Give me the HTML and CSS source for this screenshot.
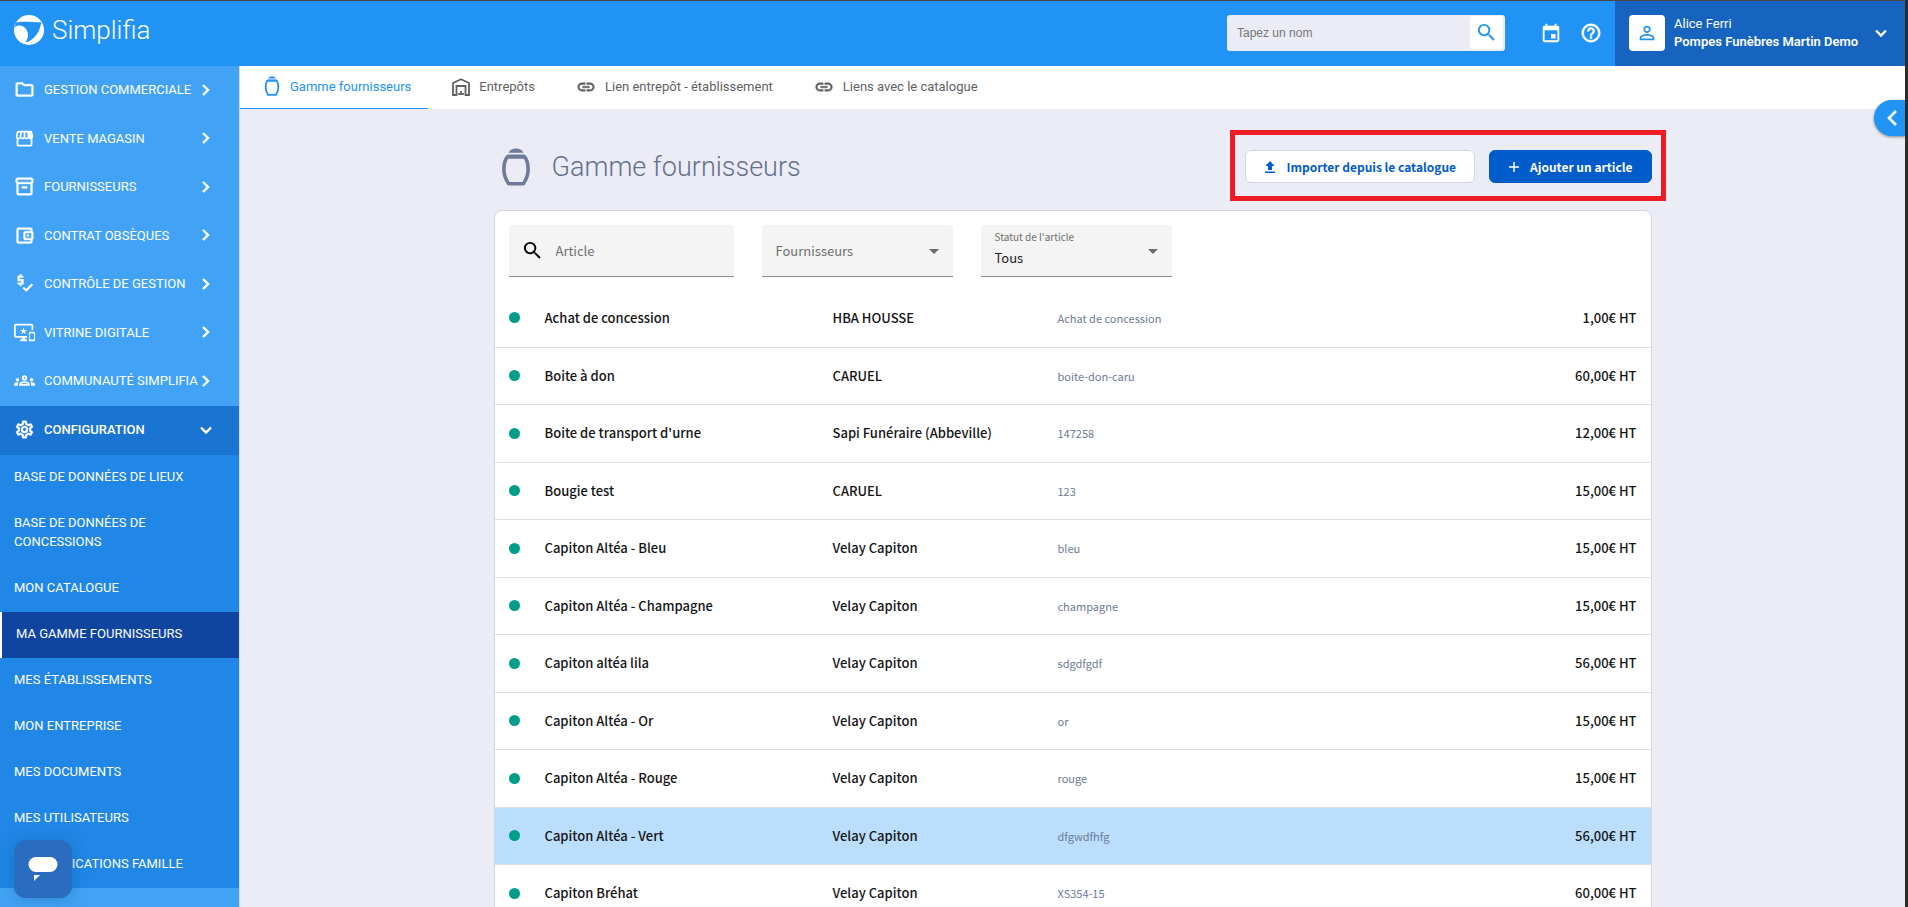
FILE: index.html
```html
<!DOCTYPE html>
<html lang="fr">
<head>
<meta charset="utf-8">
<title>Simplifia - Gamme fournisseurs</title>
<link rel="stylesheet" href="styles.css">
</head>
<body>
<svg class="defs" aria-hidden="true">
  <symbol id="chev" viewBox="0 0 16 16"><path d="M5 3l5 5-5 5" fill="none" stroke="currentColor" stroke-width="2.4"/></symbol>
  <symbol id="chev-down" viewBox="0 0 16 16"><path d="M3 5.500l5 5 5-5" fill="none" stroke="currentColor" stroke-width="2.400"/></symbol>
  <symbol id="link" viewBox="0 0 24 24"><path d="M3.900 12c0-1.710 1.390-3.100 3.100-3.100h4V7H7c-2.760 0-5 2.240-5 5s2.240 5 5 5h4v-1.900H7c-1.710 0-3.100-1.390-3.100-3.100zM8 13h8v-2H8v2zm9-6h-4v1.900h4c1.710 0 3.100 1.390 3.100 3.100s-1.390 3.100-3.100 3.100h-4V17h4c2.760 0 5-2.240 5-5s-2.240-5-5-5z" fill="currentColor" stroke="currentColor" stroke-width=".6"/></symbol>
  <symbol id="search" viewBox="0 0 24 24"><path d="M15.500 14h-.79l-.28-.27A6.471 6.471 0 0 0 16 9.500 6.500 6.500 0 1 0 9.500 16c1.610 0 3.090-.59 4.230-1.570l.27.28v.79l5 4.990L20.490 19l-4.990-5zm-6 0C7.010 14 5 11.990 5 9.500S7.010 5 9.500 5 14 7.010 14 9.500 11.990 14 9.500 14z" fill="currentColor"/></symbol>
  <symbol id="urn" viewBox="0 0 28 38"><path d="M6.500 4.800C8 1.800 11 .5 14 .5s6 1.300 7.500 4.300z" fill="currentColor"/><path d="M5.500 6.500h17l1.500 3H4z" fill="currentColor"/><path d="M5.200 9h17.600c2.500 3.500 3.300 7.500 3.300 12 0 6-2 11-4.800 14.800H6.700C3.900 32 1.900 27 1.900 21c0-4.500.8-8.500 3.300-12z" fill="none" stroke="currentColor" stroke-width="3.600" stroke-linejoin="round"/></symbol>
</svg>
<div class="app">
  <header class="topbar">
    <a class="brand" href="#">
      <svg width="30" height="30" viewBox="0 0 30 30"><circle cx="15" cy="15" r="15" fill="#fff"/><path d="M1.800 7.500C8 6 18 7.200 27.300 7.200 26 16 21 25 11.500 27.600 16 21.500 14.500 12.500 6.500 10.600 4.500 10.200 2.500 10.600.8 12.200z" fill="#2193f5"/></svg>
      <span>Simplifia</span>
    </a>
    <form class="search">
      <input type="text" placeholder="Tapez un nom" aria-label="Tapez un nom">
      <button type="button" aria-label="Rechercher"><svg width="23" height="23"><use href="#search"/></svg></button>
    </form>
    <div class="tools">
      <button type="button" aria-label="Agenda"><svg width="22" height="22" viewBox="0 0 24 24"><path d="M19 4h-1V2h-2v2H8V2H6v2H5c-1.110 0-1.990.9-1.990 2L3 20a2 2 0 0 0 2 2h14c1.100 0 2-.9 2-2V6c0-1.100-.9-2-2-2zm0 16H5V9h14v11zm-7-7h5v5h-5z" fill="#fff"/></svg></button>
      <button type="button" aria-label="Aide"><svg width="22" height="22" viewBox="0 0 24 24"><path d="M11 18h2v-2h-2v2zm1-16C6.480 2 2 6.480 2 12s4.480 10 10 10 10-4.480 10-10S17.520 2 12 2zm0 18c-4.410 0-8-3.590-8-8s3.590-8 8-8 8 3.590 8 8-3.590 8-8 8zm0-14c-2.210 0-4 1.790-4 4h2c0-1.100.9-2 2-2s2 .9 2 2c0 2-3 1.750-3 5h2c0-2.250 3-2.500 3-5 0-2.210-1.790-4-4-4z" fill="#fff" stroke="#fff" stroke-width=".6"/></svg></button>
    </div>
    <button type="button" class="user">
      <span class="avatar"><svg width="22" height="22" viewBox="0 0 24 24"><path d="M12 5.900a2.100 2.100 0 1 1 0 4.200 2.100 2.100 0 0 1 0-4.200m0 9c2.970 0 6.100 1.460 6.100 2.100v1.100H5.900V17c0-.64 3.130-2.100 6.100-2.100M12 4C9.790 4 8 5.790 8 8s1.790 4 4 4 4-1.790 4-4-1.790-4-4-4zm0 9c-2.670 0-8 1.340-8 4v3h16v-3c0-2.660-5.330-4-8-4z" fill="#2193f5"/></svg></span>
      <span class="who"><span>Alice Ferri</span><strong>Pompes Funèbres Martin Demo</strong></span>
      <svg width="16" height="16"><use href="#chev-down"/></svg>
    </button>
  </header>

  <nav class="sidebar" aria-label="Menu principal">
    <ul class="menu">
      <li><a href="#"><svg viewBox="0 0 24 24"><path d="M9.170 6l2 2H20v10H4V6h5.170M10 4H4c-1.100 0-1.990.9-1.990 2L2 18c0 1.100.9 2 2 2h16c1.100 0 2-.9 2-2V8c0-1.100-.9-2-2-2h-8l-2-2z" stroke="currentColor" stroke-width=".5"/></svg><span>GESTION COMMERCIALE</span><svg class="arrow"><use href="#chev"/></svg></a></li>
      <li><a href="#"><svg viewBox="0 0 24 24"><path d="M21.900 8.890l-1.050-4.370c-.22-.9-1-1.520-1.910-1.520H5.050c-.9 0-1.690.63-1.900 1.520L2.100 8.890c-.24 1.020-.02 2.060.62 2.880.08.110.19.190.28.290V19c0 1.100.9 2 2 2h14c1.100 0 2-.9 2-2v-6.940c.09-.09.2-.18.28-.28.64-.82.87-1.870.62-2.890zM13 5h1.960l.54 4.520c.05.390-.07.780-.33 1.070-.22.260-.54.410-.95.410-.67 0-1.220-.59-1.220-1.310V5zM8.490 9.520L9.040 5H11v4.690c0 .72-.55 1.310-1.290 1.310-.34 0-.65-.15-.89-.41a1.420 1.420 0 0 1-.33-1.070zm-4.450-.16L5.050 5h1.970l-.58 4.860c-.08.650-.6 1.140-1.210 1.140-.49 0-.8-.29-.93-.47-.27-.32-.36-.75-.26-1.170zM5 19v-6.030c.08.010.15.030.23.030.87 0 1.660-.36 2.240-.95.6.6 1.400.95 2.310.95.87 0 1.650-.36 2.230-.93.590.57 1.390.93 2.290.93.840 0 1.640-.35 2.240-.95.580.59 1.370.95 2.240.95.080 0 .15-.02.23-.03V19H5z"/></svg><span>VENTE MAGASIN</span><svg class="arrow"><use href="#chev"/></svg></a></li>
      <li><a href="#"><svg viewBox="0 0 24 24"><path d="M20 2H4c-1 0-2 .9-2 2v3.010c0 .72.430 1.340 1 1.690V20c0 1.100 1.100 2 2 2h14c.9 0 2-.9 2-2V8.700c.57-.35 1-.97 1-1.690V4c0-1.100-1-2-2-2zm-1 18H5V9h14v11zm1-13H4V4h16v3zM9 12h6v2H9z" stroke="currentColor" stroke-width=".5"/></svg><span>FOURNISSEURS</span><svg class="arrow"><use href="#chev"/></svg></a></li>
      <li><a href="#"><svg viewBox="0 0 24 24"><path d="M21 7.280V5c0-1.100-.9-2-2-2H5a2 2 0 0 0-2 2v14a2 2 0 0 0 2 2h14c1.100 0 2-.9 2-2v-2.280A2 2 0 0 0 22 15V9a2 2 0 0 0-1-1.720zM20 9v6h-7V9h7zM5 19V5h14v2h-6c-1.100 0-2 .9-2 2v6c0 1.100.9 2 2 2h6v2H5z" stroke="currentColor" stroke-width=".5"/><circle cx="16" cy="12" r="1.500"/></svg><span>CONTRAT OBSÈQUES</span><svg class="arrow"><use href="#chev"/></svg></a></li>
      <li><a href="#"><svg viewBox="0 0 24 24"><path class="line" d="M10.800 4.200H5.200v3.900h4.600V12H4M7.500 1.500v2.700M7.500 12v2.500M10.500 16.500l3.500 3.300 7-7"/></svg><span>CONTRÔLE DE GESTION</span><svg class="arrow"><use href="#chev"/></svg></a></li>
      <li><a href="#"><svg viewBox="0 0 24 24"><path d="M23 11.010L18 11c-.55 0-1 .45-1 1v9c0 .55.450 1 1 1h5c.55 0 1-.45 1-1v-9c0-.55-.45-.99-1-.99zM23 20h-5v-7h5v7zM20 2H2C.89 2 0 2.890 0 4v12c0 1.100.89 2 2 2h7v2H7v2h8v-2h-2v-2h2v-2H2V4h18v5h2V4a2 2 0 0 0-2-2zm-8.030 7L11 6l-.97 3H7l2.470 1.760-.94 2.910 2.470-1.800 2.470 1.800-.94-2.910L15 9h-3.030z"/></svg><span>VITRINE DIGITALE</span><svg class="arrow"><use href="#chev"/></svg></a></li>
      <li><a href="#"><svg viewBox="0 0 24 24"><path d="M4 13c1.100 0 2-.9 2-2s-.9-2-2-2-2 .9-2 2 .9 2 2 2zm1.130 1.100C4.760 14.040 4.390 14 4 14c-.99 0-1.930.210-2.780.580A2.010 2.010 0 0 0 0 16.430V18h4.500v-1.610c0-.83.230-1.610.63-2.290zM20 13c1.100 0 2-.9 2-2s-.9-2-2-2-2 .9-2 2 .9 2 2 2zm4 3.430c0-.81-.48-1.530-1.220-1.850A6.950 6.950 0 0 0 20 14c-.39 0-.76.040-1.130.1.400.68.630 1.460.63 2.290V18H24v-1.570zm-7.760-2.780A10.500 10.500 0 0 0 12 12.750c-1.630 0-3.070.390-4.240.9A2.990 2.990 0 0 0 6 16.390V18h12v-1.610c0-1.180-.68-2.260-1.760-2.740zM8.070 16c.09-.23.130-.39.910-.69a8.300 8.300 0 0 1 6.040 0c.77.300.81.460.91.690H8.070zM12 8c.55 0 1 .45 1 1s-.45 1-1 1-1-.45-1-1 .45-1 1-1m0-2a3 3 0 1 0 0 6 3 3 0 0 0 0-6z"/></svg><span>COMMUNAUTÉ SIMPLIFIA</span><svg class="arrow"><use href="#chev"/></svg></a></li>
      <li class="open"><a href="#"><svg viewBox="0 0 24 24"><path d="M19.430 12.980c.04-.32.070-.64.070-.98s-.03-.66-.07-.98l2.110-1.650c.19-.15.240-.42.120-.64l-2-3.460a.5.500 0 0 0-.61-.22l-2.490 1c-.52-.4-1.080-.73-1.690-.98l-.38-2.650A.49.490 0 0 0 14 2h-4a.49.490 0 0 0-.49.420l-.38 2.650c-.61.250-1.170.590-1.690.98l-2.490-1a.5.500 0 0 0-.61.220l-2 3.460c-.13.220-.07.490.12.640l2.110 1.650c-.04.320-.07.650-.07.980s.03.660.07.980l-2.110 1.650c-.19.150-.24.420-.12.640l2 3.460c.12.220.390.290.61.220l2.490-1c.52.400 1.080.730 1.690.98l.38 2.650c.03.240.240.420.49.420h4c.25 0 .46-.18.49-.42l.38-2.650c.61-.25 1.170-.59 1.690-.98l2.490 1a.5.500 0 0 0 .61-.22l2-3.460c.12-.22.070-.49-.12-.64l-2.110-1.650zm-1.980-1.710c.04.310.050.520.050.73 0 .21-.02.430-.05.730l-.14 1.130.89.700 1.080.840-.7 1.210-1.270-.51-1.040-.42-.9.680c-.43.320-.84.560-1.250.73l-1.060.43-.16 1.130-.2 1.350h-1.400l-.19-1.350-.16-1.130-1.060-.43c-.43-.18-.83-.41-1.230-.71l-.91-.7-1.060.43-1.270.510-.7-1.210 1.080-.84.890-.7-.14-1.130c-.03-.31-.05-.54-.05-.74s.02-.43.050-.73l.14-1.130-.89-.7-1.080-.84.700-1.210 1.270.510 1.040.420.9-.68c.43-.32.840-.56 1.250-.73l1.060-.43.160-1.130.2-1.350h1.390l.19 1.350.16 1.130 1.060.43c.43.180.83.410 1.230.71l.91.700 1.060-.43 1.270-.51.700 1.210-1.070.85-.89.700.14 1.130zM12 8a4 4 0 1 0 0 8 4 4 0 0 0 0-8zm0 6a2 2 0 1 1 0-4 2 2 0 0 1 0 4z" stroke="currentColor" stroke-width=".5"/></svg><span>CONFIGURATION</span><svg class="arrow"><use href="#chev-down"/></svg></a></li>
    </ul>
    <ul class="submenu">
      <li><a href="#">BASE DE DONNÉES DE LIEUX</a></li>
      <li><a href="#">BASE DE DONNÉES DE CONCESSIONS</a></li>
      <li><a href="#">MON CATALOGUE</a></li>
      <li><a href="#" class="current" aria-current="page">MA GAMME FOURNISSEURS</a></li>
      <li><a href="#">MES ÉTABLISSEMENTS</a></li>
      <li><a href="#">MON ENTREPRISE</a></li>
      <li><a href="#">MES DOCUMENTS</a></li>
      <li><a href="#">MES UTILISATEURS</a></li>
      <li><a href="#">COMMUNICATIONS FAMILLE</a></li>
    </ul>
  </nav>

  <main class="main">
    <nav class="tabs" aria-label="Sections">
      <a href="#" class="active"><svg width="16" height="20"><use href="#urn"/></svg>Gamme fournisseurs</a>
      <a href="#"><svg width="18" height="18" viewBox="0 0 18 18" fill="none" stroke="currentColor" stroke-width="1.800"><path d="M1 17V5l8-3.800L17 5v12h-3.500V8h-9v9z"/><path d="M7 17v-2m2 2v-4m2 4v-2"/></svg>Entrepôts</a>
      <a href="#"><svg width="20" height="20"><use href="#link"/></svg>Lien entrepôt - établissement</a>
      <a href="#"><svg width="20" height="20"><use href="#link"/></svg>Liens avec le catalogue</a>
    </nav>
    <div class="content">
      <div class="heading">
        <svg width="28" height="38"><use href="#urn"/></svg>
        <h1>Gamme fournisseurs</h1>
        <div class="actions">
          <button type="button" class="btn"><svg width="12" height="12" viewBox="0 0 12 12"><path d="M6 0l4.500 5H8v4H4V5H1.500zM1 10.500h10V12H1z" fill="currentColor"/></svg>Importer depuis le catalogue</button>
          <button type="button" class="btn primary"><svg width="12" height="12" viewBox="0 0 12 12"><path d="M6 1v10M1 6h10" stroke="currentColor" stroke-width="1.500"/></svg>Ajouter un article</button>
        </div>
      </div>
      <section class="card">
        <div class="filters">
          <label class="field wide"><svg class="glass" width="23" height="23"><use href="#search"/></svg><input type="text" placeholder="Article" aria-label="Article"></label>
          <label class="field"><select aria-label="Fournisseurs"><option>Fournisseurs</option></select><span class="caret"></span></label>
          <label class="field chosen"><span class="caption">Statut de l'article</span><select><option>Tous</option></select><span class="caret"></span></label>
        </div>
        <table>
          <colgroup><col class="c-dot"><col class="c-name"><col class="c-sup"><col><col class="c-price"></colgroup>
          <tbody>
            <tr><td><i class="dot"></i></td><td>Achat de concession</td><td>HBA HOUSSE</td><td class="ref">Achat de concession</td><td class="price">1,00€ HT</td></tr>
            <tr><td><i class="dot"></i></td><td>Boite à don</td><td>CARUEL</td><td class="ref">boite-don-caru</td><td class="price">60,00€ HT</td></tr>
            <tr><td><i class="dot"></i></td><td>Boite de transport d'urne</td><td>Sapi Funéraire (Abbeville)</td><td class="ref">147258</td><td class="price">12,00€ HT</td></tr>
            <tr><td><i class="dot"></i></td><td>Bougie test</td><td>CARUEL</td><td class="ref">123</td><td class="price">15,00€ HT</td></tr>
            <tr><td><i class="dot"></i></td><td>Capiton Altéa - Bleu</td><td>Velay Capiton</td><td class="ref">bleu</td><td class="price">15,00€ HT</td></tr>
            <tr><td><i class="dot"></i></td><td>Capiton Altéa - Champagne</td><td>Velay Capiton</td><td class="ref">champagne</td><td class="price">15,00€ HT</td></tr>
            <tr><td><i class="dot"></i></td><td>Capiton altéa lila</td><td>Velay Capiton</td><td class="ref">sdgdfgdf</td><td class="price">56,00€ HT</td></tr>
            <tr><td><i class="dot"></i></td><td>Capiton Altéa - Or</td><td>Velay Capiton</td><td class="ref">or</td><td class="price">15,00€ HT</td></tr>
            <tr><td><i class="dot"></i></td><td>Capiton Altéa - Rouge</td><td>Velay Capiton</td><td class="ref">rouge</td><td class="price">15,00€ HT</td></tr>
            <tr class="hover"><td><i class="dot"></i></td><td>Capiton Altéa - Vert</td><td>Velay Capiton</td><td class="ref">dfgwdfhfg</td><td class="price">56,00€ HT</td></tr>
            <tr><td><i class="dot"></i></td><td>Capiton Bréhat</td><td>Velay Capiton</td><td class="ref">XS354-15</td><td class="price">60,00€ HT</td></tr>
          </tbody>
        </table>
      </section>
    </div>
    <button type="button" class="drawer" aria-label="Ouvrir le panneau"><svg width="12" height="18" viewBox="0 0 12 18"><path d="M10 2L3 9l7 7" fill="none" stroke="#fff" stroke-width="2.600"/></svg></button>
  </main>
  <button type="button" class="chat" aria-label="Discussion"><svg width="30" height="24" viewBox="0 0 30 24"><rect x=".5" width="29" height="15" rx="7.500" fill="#fff"/><path d="M6 18h6l-6 6z" fill="#fff"/></svg></button>
</div>
</body>
</html>
```
FILE: styles.css
```css
* { box-sizing: border-box; }
body {
  margin: 0;
  font-family: Roboto, "Liberation Sans", sans-serif;
  font-size: 13px;
  color: #141414;
  background: #2b2b2b;
}
a { color: inherit; text-decoration: none; }
button { border: 0; padding: 0; background: none; font: inherit; color: inherit; display: flex; align-items: center; justify-content: center; }
ul { list-style: none; margin: 0; padding: 0; }
.defs { position: absolute; width: 0; height: 0; }

.app {
  position: relative;
  display: grid;
  grid-template: 66px minmax(0, 1fr) / 240px minmax(0, 1fr);
  height: 100vh;
  padding-right: 3px;
  overflow: hidden;
}

.topbar {
  grid-column: 1 / -1;
  display: flex;
  align-items: stretch;
  background: #2193f5;
  border-top: 1px solid #484848;
  color: #fff;
}
.brand { display: flex; align-items: flex-start; gap: 8px; padding: 14px; margin-right: auto; font-size: 26px; line-height: 30px; font-weight: 300; }
.search { align-self: flex-start; display: flex; width: 278px; height: 36px; margin-top: 14px; padding: 1px 2px 2px 0; background: #ececf6; border-radius: 3px; }
.search input { flex: 1; min-width: 0; border: 0; padding: 0 10px; background: none; font: 12px "Liberation Sans", sans-serif; }
.search input::placeholder { color: #757575; opacity: 1; }
.search button { width: 33px; background: #fff; color: #2193f5; border-radius: 3px; }
.tools { display: flex; gap: 18px; padding: 0 13px 2px 35px; }
.user { width: 290px; padding: 0 16px 2px 14px; gap: 9px; background: #1664c0; text-align: left; }
.avatar { display: flex; align-items: center; justify-content: center; width: 36px; height: 36px; background: #fff; border-radius: 4px; }
.who { display: flex; flex-direction: column; margin-right: auto; line-height: 18px; }
.who strong { font-weight: 600; white-space: nowrap; }

.sidebar { background: #42a3f6; color: #fff; border-right: 1px solid #d6daee; overflow: hidden; }
.menu a { display: flex; align-items: center; gap: 9px; height: 48px; padding: 0 25px 2px 14px; white-space: nowrap; }
.menu li:nth-child(odd) a, .menu .open a { height: 49px; }
.menu svg { width: 21px; height: 21px; fill: currentColor; flex: none; }
.menu .line { fill: none; stroke: currentColor; stroke-width: 2.4; }
.menu span { flex: 1; min-width: 0; }
.menu .arrow { width: 16px; height: 16px; }
.menu .open { background: #1a74d2; font-weight: 500; }
.submenu { background: #2087e6; line-height: 19px; }
.submenu a { display: block; padding: 12px 50px 15px 14px; }
.submenu .current { background: #0f45a0; border-left: 2px solid #fff; }

.main { position: relative; background: #ececf6; overflow: hidden; }
.tabs { display: flex; gap: 17px; height: 43px; background: #fff; color: #616161; }
.tabs a { display: flex; align-items: center; gap: 9px; height: 43px; padding: 0 0 2px 24px; white-space: nowrap; }
.tabs .active { color: #2193f5; border-bottom: 1px solid #2193f5; gap: 10px; padding-right: 17px; margin-right: -17px; }

.content { max-width: 1158px; margin: 0 auto; }
.heading { display: flex; align-items: center; height: 101px; padding: 14px 0 0 8px; color: #6e7a98; }
h1 { flex: 1; margin: 0 0 0 22px; font-size: 27px; font-weight: 300; color: #64708f; }
.actions { position: relative; display: flex; gap: 14px; }
.actions::after { content: ""; position: absolute; inset: -20px -14px -18px -15px; border: 5px solid #ee1c25; pointer-events: none; }
.btn {
  gap: 10px;
  height: 33px;
  padding: 0 18px;
  border: 1px solid #d3d6e4;
  border-radius: 6px;
  background: #fff;
  color: #005bcb;
  font: 700 12px "Noto Sans CJK SC", sans-serif;
  white-space: nowrap;
}
.primary { background: #005bcb; border-color: #005bcb; color: #fff; }

.card { background: #fff; border: 1px solid #d3d6e4; border-radius: 8px 8px 0 0; font-family: "Noto Sans CJK SC", sans-serif; }
.filters { display: flex; padding: 14px 14px 12px; gap: 28px; }
.field { position: relative; display: flex; align-items: center; width: 191px; height: 52px; background: #f4f4f4; border-bottom: 1px solid #8c8c8c; border-radius: 4px 4px 0 0; }
.wide { width: 225px; }
.field input, .field select { appearance: none; width: 100%; height: 100%; padding: 0 14px; border: 0; background: none; font: 13px "Noto Sans CJK SC", sans-serif; color: #6f6f6f; }
.field input { padding: 0 12px; }
.field input::placeholder { color: #6f6f6f; opacity: 1; }
.glass { flex: none; margin-left: 12px; color: #000; }
.caret { position: absolute; right: 14px; top: 24px; border: 5px solid transparent; border-top-color: #6b6b6b; border-bottom: 0; pointer-events: none; }
.caption { position: absolute; left: 14px; top: 4px; font-size: 10px; line-height: 16px; color: #6f6f6f; }
.chosen select { padding-top: 14px; color: #212121; }

table { width: 100%; border-collapse: collapse; table-layout: fixed; }
.c-dot { width: 50px; }
.c-name { width: 288px; }
.c-sup { width: 225px; }
.c-price { width: 150px; }
tr { height: 58px; border-bottom: 1px solid #dedfe3; }
tr:nth-child(even) { height: 57px; }
td { padding: 0; font-size: 13px; font-weight: 500; line-height: 20px; white-space: nowrap; }
td:first-child { padding-left: 14px; }
.dot { display: block; width: 11px; height: 11px; border-radius: 50%; background: #009e8a; }
.ref { font-size: 11px; font-weight: 400; color: #6e7a98; }
.price { text-align: right; padding-right: 14px; }
.hover { background: #badefb; }

.drawer { position: absolute; top: 34px; right: 0; width: 31px; height: 36px; padding-left: 4px; background: #2193f5; border-radius: 18px 0 0 18px; box-shadow: 0 1px 3px rgba(0, 0, 0, .45); }
.chat { position: absolute; left: 14px; bottom: 9px; width: 58px; height: 58px; background: #2a6dc0; border-radius: 12px; box-shadow: 0 2px 16px rgba(0, 60, 110, .25); }
```
